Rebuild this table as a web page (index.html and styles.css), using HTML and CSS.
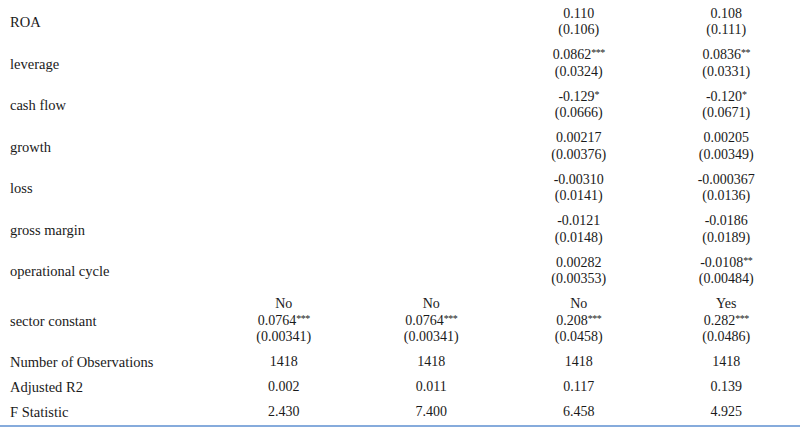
FILE: index.html
```html
<!DOCTYPE html>
<html>
<head>
<meta charset="utf-8">
<link rel="stylesheet" href="styles.css">
</head>
<body>
<table class="reg">
  <colgroup>
    <col class="c-label"><col class="c-val"><col class="c-val"><col class="c-val"><col class="c-val">
  </colgroup>
  <tbody>
    <tr><td class="lbl">ROA</td><td></td><td></td><td>0.110<br>(0.106)</td><td>0.108<br>(0.111)</td></tr>
    <tr><td class="lbl">leverage</td><td></td><td></td><td>0.0862<sup>***</sup><br>(0.0324)</td><td>0.0836<sup>**</sup><br>(0.0331)</td></tr>
    <tr><td class="lbl">cash flow</td><td></td><td></td><td>-0.129<sup>*</sup><br>(0.0666)</td><td>-0.120<sup>*</sup><br>(0.0671)</td></tr>
    <tr><td class="lbl">growth</td><td></td><td></td><td>0.00217<br>(0.00376)</td><td>0.00205<br>(0.00349)</td></tr>
    <tr><td class="lbl">loss</td><td></td><td></td><td>-0.00310<br>(0.0141)</td><td>-0.000367<br>(0.0136)</td></tr>
    <tr><td class="lbl">gross margin</td><td></td><td></td><td>-0.0121<br>(0.0148)</td><td>-0.0186<br>(0.0189)</td></tr>
    <tr><td class="lbl">operational cycle</td><td></td><td></td><td>0.00282<br>(0.00353)</td><td>-0.0108<sup>**</sup><br>(0.00484)</td></tr>
    <tr><td class="lbl">sector constant</td><td>No<br>0.0764<sup>***</sup><br>(0.00341)</td><td>No<br>0.0764<sup>***</sup><br>(0.00341)</td><td>No<br>0.208<sup>***</sup><br>(0.0458)</td><td>Yes<br>0.282<sup>***</sup><br>(0.0486)</td></tr>
    <tr><td class="lbl">Number of Observations</td><td>1418</td><td>1418</td><td>1418</td><td>1418</td></tr>
    <tr><td class="lbl">Adjusted R2</td><td>0.002</td><td>0.011</td><td>0.117</td><td>0.139</td></tr>
    <tr class="last"><td class="lbl">F Statistic</td><td>2.430</td><td>7.400</td><td>6.458</td><td>4.925</td></tr>
  </tbody>
</table>
</body>
</html>
```
FILE: styles.css
```css
html, body {
  margin: 0;
  padding: 0;
  background: #ffffff;
}
body {
  padding-top: 1.5px;
}
.reg {
  width: 800px;
  border-collapse: collapse;
  table-layout: fixed;
  font-family: "Liberation Serif", "Times New Roman", serif;
  font-size: 14px;
  color: #1a1a1a;
}
.c-label { width: 210px; }
.reg td {
  padding: 4.25px 0;
  line-height: 16.5px;
  text-align: center;
  vertical-align: middle;
}
.reg td.lbl {
  text-align: left;
  padding-left: 10px;
  font-size: 14.5px;
}
.reg sup {
  font-size: 10px;
  line-height: 0;
  vertical-align: 3px;
  letter-spacing: -0.5px;
}
.reg tr.last td {
  border-bottom: 2px solid #86abdc;
}
```
